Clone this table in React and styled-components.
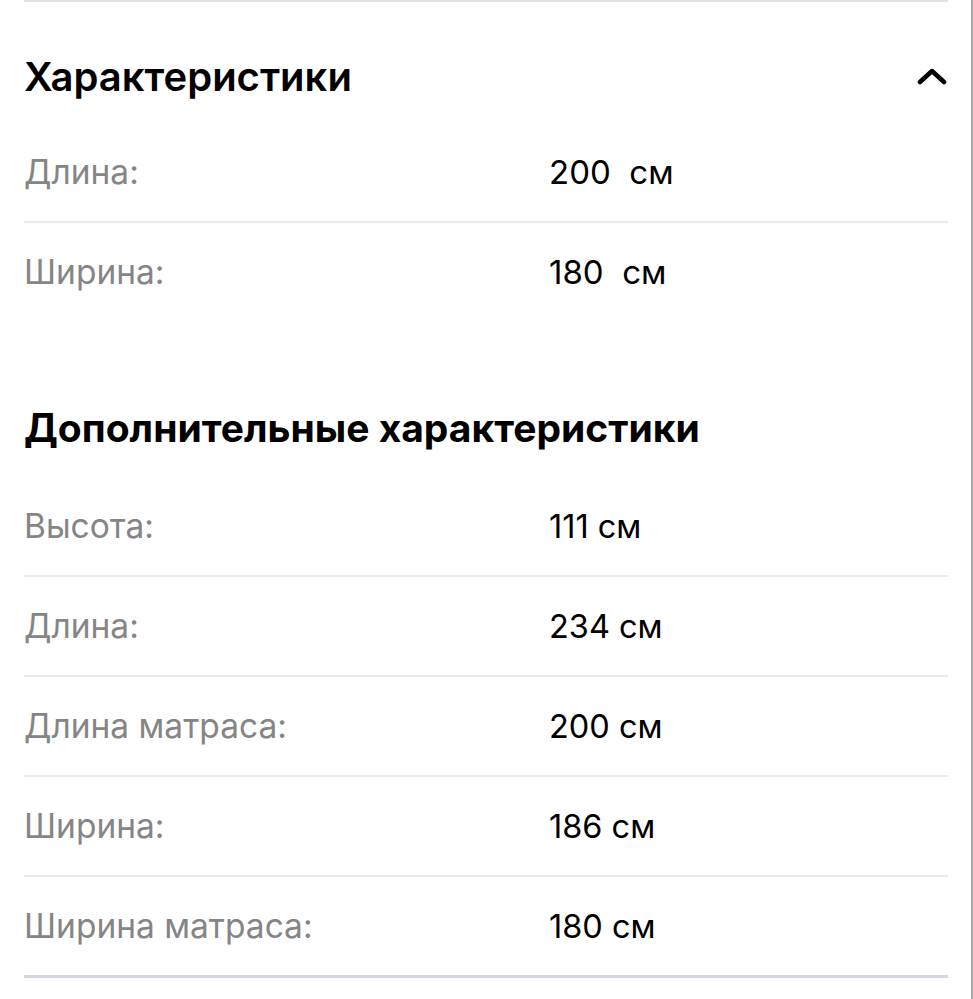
import React from "react";
import styled, { createGlobalStyle } from "styled-components";

const GlobalStyle = createGlobalStyle`
  html, body {
    margin: 0;
    padding: 0;
    background: #ffffff;
  }
  body {
    font-family: Inter, "Noto Sans", sans-serif;
    color: #000;
  }
`;

const Page = styled.div`
  width: 973px;
  min-height: 999px;
  box-sizing: border-box;
  border-right: 2px solid #a8a8a8;
  overflow: hidden;
`;

const Inner = styled.div`
  margin: 0 23px 0 24px;
  border-top: 2px solid #e2e2e6;
`;

const SectionHead = styled.div`
  display: flex;
  align-items: center;
  justify-content: space-between;
  padding: ${(p) => (p.first ? "50px 0 21px" : "82px 0 24px")};
`;

const Title = styled.h2`
  margin: 0;
  font-size: ${(p) => (p.bold ? "39px" : "40px")};
  line-height: 50px;
  font-weight: ${(p) => (p.bold ? 700 : 600)};
`;

const Chevron = styled.svg`
  width: 30px;
  height: 20px;
  margin-right: 1px;
`;

const Row = styled.div`
  display: grid;
  grid-template-columns: 525px 1fr;
  align-items: center;
  height: 98px;
  border-bottom: ${(p) =>
    p.last ? "3px solid #d6d6de" : p.noLine ? "none" : "2px solid #ebebeb"};
`;

const Label = styled.span`
  font-size: 33.5px;
  color: #858585;
`;

const Value = styled.span`
  font-size: ${(p) => (p.tight ? "32.5px" : "33px")};
  color: #000;
  white-space: pre;
`;

const main = [
  ["Длина:", "200  см"],
  ["Ширина:", "180  см"],
];

const extra = [
  ["Высота:", "111 см"],
  ["Длина:", "234 см"],
  ["Длина матраса:", "200 см"],
  ["Ширина:", "186 см"],
  ["Ширина матраса:", "180 см"],
];

const App = () => {
  return (
    <>
      <GlobalStyle />
      <Page>
        <Inner>
          <SectionHead first>
            <Title>Характеристики</Title>
            <Chevron viewBox="0 0 30 20">
              <polyline
                points="3,15 15,4 27,15"
                fill="none"
                stroke="#000"
                strokeWidth="4.5"
                strokeLinecap="round"
                strokeLinejoin="round"
              />
            </Chevron>
          </SectionHead>
          {main.map(([l, v], i) => (
            <Row key={l} noLine={i === main.length - 1}>
              <Label>{l}</Label>
              <Value>{v}</Value>
            </Row>
          ))}
          <SectionHead>
            <Title bold>Дополнительные характеристики</Title>
          </SectionHead>
          {extra.map(([l, v], i) => (
            <Row key={l + i} last={i === extra.length - 1}>
              <Label>{l}</Label>
              <Value tight>{v}</Value>
            </Row>
          ))}
        </Inner>
      </Page>
    </>
  );
};

export default App;
